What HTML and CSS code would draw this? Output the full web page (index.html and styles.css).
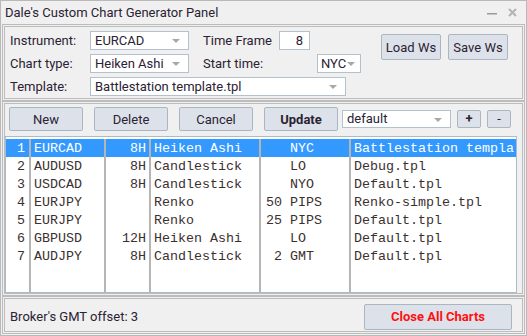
FILE: index.html
```html
<!DOCTYPE html>
<html lang="en">
<head>
    <meta charset="UTF-8">
    <title>Dale's Custom Chart Generator Panel</title>
    <link rel="stylesheet" href="styles.css">
</head>
<body>
    <div class="window">
        <div class="titlebar">
            <span class="title">Dale's Custom Chart Generator Panel</span>
            <div class="win-icons">
                <svg width="10" height="4" viewBox="0 0 10 4"><rect x="0" y="2" width="10" height="1.5" fill="#9a9a9a"/></svg>
                <svg width="9" height="9" viewBox="0 0 9 9"><path d="M1 1 L8 8 M8 1 L1 8" stroke="#b4b4b4" stroke-width="2"/></svg>
            </div>
        </div>

        <div class="panel settings">
            <div class="fields">
                <div class="row">
                    <label class="lbl">Instrument:</label>
                    <div class="combo w-instr">EURCAD</div>
                    <label class="lbl lbl-tf">Time Frame</label>
                    <div class="textbox">8</div>
                </div>
                <div class="row">
                    <label class="lbl">Chart type:</label>
                    <div class="combo w-instr">Heiken Ashi</div>
                    <label class="lbl lbl-start">Start time:</label>
                    <div class="combo w-start">NYC</div>
                </div>
                <div class="row">
                    <label class="lbl">Template:</label>
                    <div class="combo w-tpl">Battlestation template.tpl</div>
                </div>
            </div>
            <div class="ws-buttons">
                <button class="btn ws">Load Ws</button>
                <button class="btn ws">Save Ws</button>
            </div>
        </div>

        <div class="panel charts">
            <div class="toolbar">
                <button class="btn tool">New</button>
                <button class="btn tool">Delete</button>
                <button class="btn tool">Cancel</button>
                <button class="btn tool bold">Update</button>
                <div class="combo w-default">default</div>
                <button class="btn small bold">+</button>
                <button class="btn small">-</button>
            </div>
            <div class="table-wrap">
                <table class="grid">
                    <colgroup>
                        <col class="c-num"><col class="c-instr"><col class="c-tf"><col class="c-type"><col class="c-start"><col>
                    </colgroup>
                    <tbody id="rows"></tbody>
                </table>
            </div>
        </div>

        <div class="panel footer">
            <span class="offset">Broker's GMT offset: 3</span>
            <button class="btn close-all">Close All Charts</button>
        </div>
    </div>

    <script>
        const charts = [
            ['1', 'EURCAD', '8H', 'Heiken Ashi', '   NYC', 'Battlestation templa'],
            ['2', 'AUDUSD', '8H', 'Candlestick', '   LO', 'Debug.tpl'],
            ['3', 'USDCAD', '8H', 'Candlestick', '   NYO', 'Default.tpl'],
            ['4', 'EURJPY', '', 'Renko', '50 PIPS', 'Renko-simple.tpl'],
            ['5', 'EURJPY', '', 'Renko', '25 PIPS', 'Default.tpl'],
            ['6', 'GBPUSD', '12H', 'Heiken Ashi', '   LO', 'Default.tpl'],
            ['7', 'AUDJPY', '8H', 'Candlestick', ' 2 GMT', 'Default.tpl']
        ];

        const body = document.getElementById('rows');
        const cls = ['num', 'instr', 'tf', 'type', 'start', 'tpl'];

        charts.forEach((chart, i) => {
            const tr = document.createElement('tr');
            if (i === 0) tr.className = 'selected';
            chart.forEach((value, j) => {
                const td = document.createElement('td');
                td.className = cls[j];
                td.textContent = value;
                tr.appendChild(td);
            });
            body.appendChild(tr);
        });

        // empty row stretches the column lines down to the bottom
        const filler = document.createElement('tr');
        filler.className = 'filler';
        cls.forEach(c => {
            const td = document.createElement('td');
            td.className = c;
            filler.appendChild(td);
        });
        body.appendChild(filler);
    </script>
</body>
</html>
```

FILE: styles.css
```css
* {
    box-sizing: border-box;
}
body {
    margin: 0;
    font-family: Roboto, sans-serif;
    font-size: 13px;
    color: #2b2233;
}
.window {
    width: 527px;
    height: 336px;
    background-color: #f0f0f0;
    border: 1px solid #b9b9b9;
    padding: 0 1px;
}
.titlebar {
    height: 23px;
    display: flex;
    align-items: center;
    padding: 0 8px 0 3px;
}
.title {
    flex: 1;
    margin-top: -1px;
}
.win-icons {
    display: flex;
    align-items: center;
    gap: 11px;
}
.panel {
    border: 3px double #bcbcbc;
}
.settings {
    height: 77px;
    display: flex;
    padding: 4px 0 0 5px;
}
.fields {
    width: 371px;
    display: flex;
    flex-direction: column;
    gap: 4px;
}
.row {
    display: flex;
    align-items: center;
    height: 19px;
}
.lbl {
    width: 80px;
}
.lbl-tf {
    margin-left: 14px;
    width: 76px;
}
.lbl-start {
    margin-left: 14px;
    width: 114px;
}
.combo {
    position: relative;
    height: 19px;
    line-height: 17px;
    background-color: #fff;
    border: 1px solid #b4c0cc;
    padding-left: 4px;
}
.combo::after {
    content: "";
    position: absolute;
    right: 8px;
    top: 7px;
    border-left: 4px solid transparent;
    border-right: 4px solid transparent;
    border-top: 4px solid #a8a8a8;
}
.w-instr {
    width: 99px;
}
.w-start {
    width: 44px;
    padding-left: 3px;
}
.w-start::after {
    right: 5px;
}
.w-tpl {
    width: 256px;
}
.w-default {
    width: 109px;
    height: 18px;
    line-height: 16px;
}
.textbox {
    width: 31px;
    height: 19px;
    line-height: 17px;
    background-color: #fff;
    border: 1px solid #b4c0cc;
    text-align: right;
    padding-right: 6px;
}
.btn {
    font-family: Roboto, sans-serif;
    font-size: 13px;
    color: #2b2233;
    background-color: #dde2ea;
    border: 1px solid #aab6c4;
    border-radius: 2px;
    padding: 0;
}
.bold {
    font-weight: bold;
}
.ws-buttons {
    display: flex;
    gap: 7px;
    padding-top: 3px;
}
.ws {
    width: 60px;
    height: 26px;
}
.charts {
    height: 195px;
    padding: 3px 5px 0 0;
}
.toolbar {
    display: flex;
    align-items: center;
    height: 24px;
    padding-left: 4px;
    gap: 11px;
}
.tool {
    width: 74px;
    height: 24px;
}
.toolbar .w-default {
    margin-left: -7px;
}
.small {
    width: 24px;
    height: 18px;
    line-height: 14px;
    margin-left: -5px;
}
.table-wrap {
    height: 157px;
    margin-top: 5px;
    background-color: #fff;
    border: 1px solid #a9bccd;
    padding-top: 2px;
}
.grid {
    width: 100%;
    height: 100%;
    border-collapse: collapse;
    table-layout: fixed;
    font-family: "Liberation Mono", monospace;
    font-size: 13.33px;
    color: #3a3030;
}
.c-num { width: 24px; }
.c-instr { width: 75px; }
.c-tf { width: 45px; }
.c-type { width: 110px; }
.c-start { width: 90px; }
.grid td {
    height: 18px;
    padding: 0 3px;
    border-right: 2px solid #b5b5b5;
    white-space: pre;
    overflow: hidden;
}
.grid td.tpl {
    border-right: none;
}
.grid .filler td {
    height: auto;
}
.grid .num {
    text-align: right;
    padding-right: 4px;
}
.grid .tf {
    text-align: right;
}
.grid .start {
    padding-left: 5px;
}
.selected {
    background-color: #3399ff;
    color: #fff;
}
.footer {
    height: 38px;
    display: flex;
    align-items: center;
    justify-content: space-between;
    padding: 3px 10px 0 5px;
}
.close-all {
    width: 148px;
    height: 26px;
    color: #ff1010;
    font-weight: bold;
}
```
